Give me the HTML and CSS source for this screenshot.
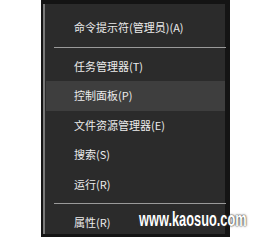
FILE: index.html
```html
<!DOCTYPE html>
<html lang="zh-CN">
<head>
<meta charset="utf-8">
<link rel="stylesheet" href="styles.css">
</head>
<body>
<div class="frame">
  <div class="panel">
    <div class="item">命令提示符(管理员)(A)</div>
    <div class="sep"></div>
    <div class="item">任务管理器(T)</div>
    <div class="item active">控制面板(P)</div>
    <div class="item">文件资源管理器(E)</div>
    <div class="item">搜索(S)</div>
    <div class="item">运行(R)</div>
    <div class="sep"></div>
    <div class="item">属性(R)</div>
  </div>
  <div class="mark">www.kaosuo.com</div>
</div>
</body>
</html>
```
FILE: styles.css
```css
html, body {
  margin: 0;
  padding: 0;
  background: #ffffff;
}
body {
  width: 258px;
  height: 240px;
  overflow: hidden;
  font-family: "Noto Sans CJK SC", "Noto Sans", sans-serif;
}
.frame {
  position: relative;
  margin-left: 41px;
  width: 189px;
  height: 237px;
  box-sizing: border-box;
  background: #141414;
  padding: 4px 5px 3px 2px;
}
.panel {
  height: 100%;
  box-sizing: border-box;
  background: #2b2b2b;
  border-left: 2px solid #7a7a7a;
  padding-top: 9px;
  display: flex;
  flex-direction: column;
}
.item {
  flex: none;
  height: 29.5px;
  line-height: 29.5px;
  padding-left: 29px;
  font-size: 11px;
  color: #ebebeb;
  white-space: nowrap;
}
.item.active {
  background: #3e3e3e;
  margin-left: 1px;
  padding-left: 28px;
}
.sep {
  flex: none;
  height: 1px;
  margin: 4px -1px 4px 9px;
  background: #9a9a9a;
}
.mark {
  position: absolute;
  left: 98px;
  top: 208px;
  font-family: "Liberation Sans", Arial, sans-serif;
  font-weight: bold;
  font-size: 20px;
  color: #ffffff;
  white-space: nowrap;
  transform: scaleX(0.64);
  transform-origin: 0 50%;
  text-shadow: 0 0 2px rgba(0,0,0,0.9), 0 0 3px rgba(100,100,100,0.8);
}
```
